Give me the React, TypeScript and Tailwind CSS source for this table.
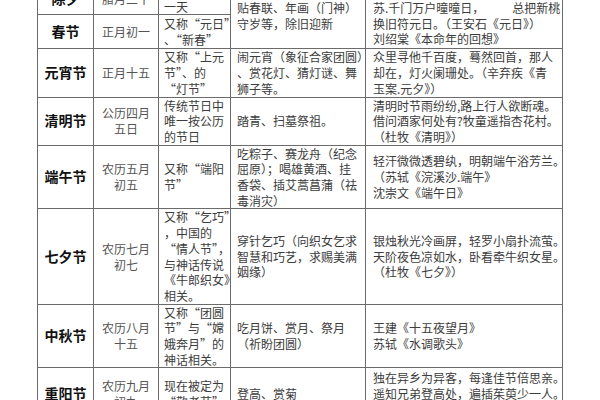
import React from 'react';

type Row = {
  name: string;
  date: string[];
  alias: string[];
  custom?: React.ReactNode[];
  poem?: React.ReactNode[];
  h: string;
};

const gap = <span className="inline-block w-[28px]" />;

const rows: Row[] = [
  {
    name: '除夕',
    date: ['腊月三十'],
    alias: ['农历年最后', '一天'],
    custom: ['贴春联、年画（门神）', '守岁等，除旧迎新'],
    poem: [
      '爆竹声中一岁除，春风送暖入屠',
      <>苏.千门万户曈曈日，{gap}总把新桃</>,
      '换旧符元日。（王安石《元日》）',
      '刘绍棠《本命年的回想》',
    ],
    h: 'h-[32px]',
  },
  { name: '春节', date: ['正月初一'], alias: ['又称“元日”', '、“新春”'], h: 'h-[34px]' },
  {
    name: '元宵节',
    date: ['正月十五'],
    alias: ['又称“上元', '节”、的', '“灯节”'],
    custom: ['闹元宵（象征合家团圆）', '、赏花灯、猜灯谜、舞', '狮子等。'],
    poem: ['众里寻他千百度，蓦然回首，那人', '却在，灯火阑珊处。（辛弃疾《青', '玉案.元夕》）'],
    h: 'h-[48px]',
  },
  {
    name: '清明节',
    date: ['公历四月', '五日'],
    alias: ['传统节日中', '唯一按公历', '的节日'],
    custom: ['踏青、扫墓祭祖。'],
    poem: ['清明时节雨纷纷,路上行人欲断魂。', '借问酒家何处有?牧童遥指杏花村。', '（杜牧《清明》）'],
    h: 'h-[48px]',
  },
  {
    name: '端午节',
    date: ['农历五月', '初五'],
    alias: ['又称“端阳', '节”'],
    custom: ['吃粽子、赛龙舟（纪念', '屈原）；喝雄黄酒、挂', '香袋、插艾蒿菖蒲（祛', '毒消灾）'],
    poem: ['轻汗微微透碧纨，明朝端午浴芳兰。', '（苏轼《浣溪沙.端午》', '沈崇文《端午日》'],
    h: 'h-[63px]',
  },
  {
    name: '七夕节',
    date: ['农历七月', '初七'],
    alias: ['又称“乞巧”', '，中国的', '“情人节”，', '与神话传说', '《牛郎织女》', '相关。'],
    custom: ['穿针乞巧（向织女乞求', '智慧和巧艺，求赐美满', '姻缘）'],
    poem: ['银烛秋光冷画屏，轻罗小扇扑流萤。', '天阶夜色凉如水，卧看牵牛织女星。', '（杜牧《七夕》）'],
    h: 'h-[95px]',
  },
  {
    name: '中秋节',
    date: ['农历八月', '十五'],
    alias: ['又称“团圆', '节”与“嫦', '娥奔月”的', '神话相关。'],
    custom: ['吃月饼、赏月、祭月', '（祈盼团圆）'],
    poem: ['王建《十五夜望月》', '苏轼《水调歌头》'],
    h: 'h-[63px]',
  },
  {
    name: '重阳节',
    date: ['农历九月', '初九'],
    alias: ['现在被定为', '“敬老节”'],
    custom: ['登高、赏菊'],
    poem: ['独在异乡为异客，每逢佳节倍思亲。', '遥知兄弟登高处，遍插茱萸少一人。', '（王维《九月九日忆山东兄弟》）'],
    h: 'h-[52px]',
  },
];

function Lines({ lines }: { lines: React.ReactNode[] }) {
  return (
    <>
      {lines.map((l, i) => (
        <div key={i} className="whitespace-nowrap">
          {l}
        </div>
      ))}
    </>
  );
}

export default function App() {
  return (
    <div
      lang="zh-CN"
      className="w-[600px] h-[400px] overflow-hidden bg-white text-[12px] leading-[15.7px] text-[#3c3c3c]"
      style={{ fontFamily: '"Noto Sans CJK SC", "Noto Sans", sans-serif' }}
    >
      <table className="ml-[37px] mt-[-18px] w-[525px] table-fixed border-collapse">
        <colgroup>
          <col className="w-[56px]" />
          <col className="w-[65px]" />
          <col className="w-[72px]" />
          <col className="w-[135px]" />
          <col className="w-[197px]" />
        </colgroup>
        <tbody>
          {rows.map((r, i) => (
            <tr key={r.name} className={r.h}>
              <td className="border border-[#6b6b6b] p-0 text-center align-middle text-[14px] font-bold text-[#111]">
                {r.name}
              </td>
              <td className="border border-[#6b6b6b] p-0 text-center align-middle text-[#555]">
                <Lines lines={r.date} />
              </td>
              <td className="border border-[#6b6b6b] py-0 pl-[5px] pr-0 align-middle overflow-visible">
                <Lines lines={r.alias} />
              </td>
              {r.custom && (
                <td
                  rowSpan={i === 0 ? 2 : 1}
                  className="border border-[#6b6b6b] py-0 pl-[6px] pr-0 align-middle"
                >
                  <Lines lines={r.custom} />
                </td>
              )}
              {r.poem && (
                <td
                  rowSpan={i === 0 ? 2 : 1}
                  className="border border-[#6b6b6b] py-0 pl-[7px] pr-0 align-middle"
                >
                  <Lines lines={r.poem} />
                </td>
              )}
            </tr>
          ))}
        </tbody>
      </table>
    </div>
  );
}
